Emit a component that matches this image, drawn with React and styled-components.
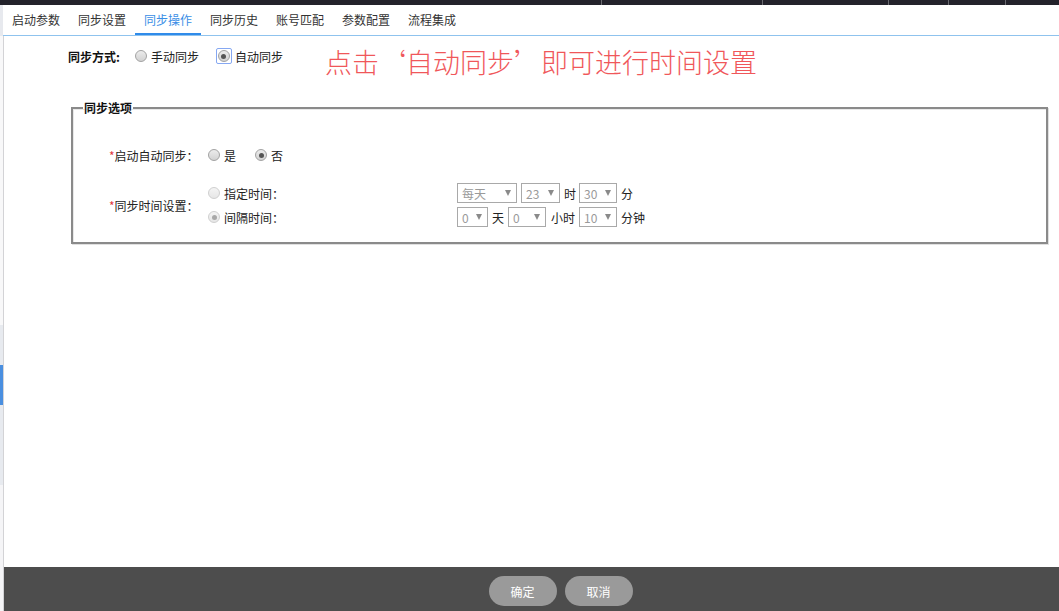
import React from "react";
import styled, { createGlobalStyle } from "styled-components";

const Global = createGlobalStyle`
  html, body { margin: 0; padding: 0; background: #fff; }
  body {
    font-family: "Noto Sans CJK SC", "Liberation Sans", sans-serif;
    font-size: 12px;
    color: #222;
  }
  * { box-sizing: border-box; }
`;

const Page = styled.div`
  width: 1059px;
  height: 611px;
  display: flex;
  flex-direction: column;
  overflow: hidden;
`;

const TopBar = styled.div`
  height: 5px;
  display: flex;
  background: #23222b;
`;

const TopSeg = styled.div`
  width: ${(p) => p.$w}px;
  flex: ${(p) => (p.$grow ? 1 : "none")};
  border-left: ${(p) => (p.$first ? "none" : "1px solid #6a6a70")};
`;

const Body = styled.div`
  flex: 1;
  display: flex;
  min-height: 0;
`;

const Sidebar = styled.div`
  width: 3px;
  display: flex;
  flex-direction: column;
`;

const SideSeg = styled.div`
  height: ${(p) => p.$h}px;
  flex: ${(p) => (p.$grow ? 1 : "none")};
  background: ${(p) => p.$c};
`;

const Main = styled.div`
  flex: 1;
  display: flex;
  flex-direction: column;
  min-width: 0;
`;

const TabBar = styled.div`
  height: 31px;
  display: flex;
  border-bottom: 1px solid #8fc3ee;
`;

const Tab = styled.div`
  width: 66px;
  height: 30px;
  line-height: 30px;
  text-align: center;
  font-size: 12px;
  color: ${(p) => (p.$active ? "#3a8ee6" : "#333")};
  border-bottom: 2px solid ${(p) => (p.$active ? "#2f8bea" : "transparent")};
  margin-bottom: -1px;
`;

const Content = styled.div`
  flex: 1;
  display: flex;
  flex-direction: column;
  border-left: 1px solid #d3d3d6;
  min-height: 0;
`;

const Form = styled.div`
  flex: 1;
  padding: 10px 11px 0 64px;
`;

const ModeRow = styled.div`
  display: flex;
  align-items: flex-start;
`;

const Cell = styled.div`
  height: 20px;
  display: flex;
  align-items: center;
  margin-right: ${(p) => p.$mr || 0}px;
`;

const BoldLabel = styled.span`
  font-weight: bold;
  color: #111;
`;

const Text = styled.span`
  color: #222;
  margin-left: ${(p) => p.$ml || 0}px;
`;

const Note = styled.div`
  margin-left: 42px;
  line-height: 32px;
  font-size: 27px;
  color: #f0575a;
  white-space: nowrap;
  font-weight: 300;
`;

const RadioDot = styled.span`
  width: 12px;
  height: 12px;
  border-radius: 50%;
  flex: none;
  display: inline-flex;
  align-items: center;
  justify-content: center;
  border: 1px solid ${(p) => (p.$disabled ? "#cfcfcf" : "#a2a2a2")};
  background: ${(p) =>
    p.$disabled
      ? "linear-gradient(#f4f4f4, #e6e6e6)"
      : "linear-gradient(#ececec, #d2d2d2)"};
  &::after {
    content: "";
    display: ${(p) => (p.$checked ? "block" : "none")};
    width: 5px;
    height: 5px;
    border-radius: 50%;
    background: ${(p) => (p.$disabled ? "#a8a8a8" : "#555")};
  }
`;

const FocusRing = styled.span`
  display: inline-flex;
  padding: 1px;
  border: 1px solid #86a8f2;
  border-radius: 2px;
  margin-left: -2px;
`;

const Fieldset = styled.fieldset`
  margin: 23px 0 0 3px;
  padding: 0 0 15px 36px;
  border: 2px solid #8a8a8a;
  box-shadow: inset 1px 1px 0 #e8e8e8, 1px 1px 0 #e0e0e0;
`;

const Legend = styled.legend`
  font-weight: bold;
  color: #111;
  line-height: 14px;
  padding: 0 1px;
  margin-left: -26px;
`;

const FormRow = styled.div`
  display: flex;
  align-items: center;
  margin-top: ${(p) => p.$mt}px;
`;

const Label = styled.div`
  width: 99px;
  color: #222;
  white-space: nowrap;
`;

const Star = styled.span`
  color: #e0393e;
`;

const Options = styled.div`
  display: flex;
  flex-direction: column;
  gap: 4px;
`;

const OptLine = styled.div`
  display: flex;
  align-items: center;
  height: 20px;
`;

const OptLabel = styled.div`
  width: 249px;
  display: flex;
  align-items: center;
`;

const Select = styled.div`
  width: ${(p) => p.$w}px;
  margin-left: ${(p) => p.$ml || 0}px;
  height: 20px;
  border: 1px solid #a9a9a9;
  display: flex;
  align-items: center;
  justify-content: space-between;
  padding: 0 5px 0 4px;
  color: #9a9a9a;
  background: #fff;
  flex: none;
  &::after {
    content: "";
    width: 0;
    height: 0;
    border-left: 3.5px solid transparent;
    border-right: 3.5px solid transparent;
    border-top: 6px solid #8a8a8a;
  }
`;

const Unit = styled.span`
  margin: 0 ${(p) => p.$mr ?? 4}px 0 ${(p) => p.$ml ?? 4}px;
  color: #222;
`;

const BottomBar = styled.div`
  height: 44px;
  background: #4d4d4d;
  display: flex;
  justify-content: center;
  align-items: flex-start;
  gap: 8px;
  padding: 9px 0 0 58px;
`;

const Button = styled.button`
  width: 68px;
  height: 30px;
  border: none;
  border-radius: 15px;
  background: #9a9a9a;
  color: #fff;
  font-family: inherit;
  font-size: 12px;
  padding: 0;
`;

function Radio({ checked, disabled }) {
  return <RadioDot $checked={checked} $disabled={disabled} />;
}

const tabs = ["启动参数", "同步设置", "同步操作", "同步历史", "账号匹配", "参数配置", "流程集成"];

export default function App() {
  return (
    <>
      <Global />
      <Page>
        <TopBar>
          <TopSeg $first $w={601} />
          <TopSeg $w={161} />
          <TopSeg $w={126} />
          <TopSeg $w={60} />
          <TopSeg $w={57} />
          <TopSeg $grow />
        </TopBar>
        <Body>
          <Sidebar>
            <SideSeg $h={31} $c="#e7e9ee" />
            <SideSeg $h={289} $c="#f8f8f9" />
            <SideSeg $h={40} $c="#e7eaef" />
            <SideSeg $h={40} $c="#4a8fe0" />
            <SideSeg $h={80} $c="#e7eaef" />
            <SideSeg $grow $c="#f5f5f7" />
          </Sidebar>
          <Main>
            <TabBar>
              {tabs.map((t, i) => (
                <Tab key={t} $active={i === 2}>
                  {t}
                </Tab>
              ))}
            </TabBar>
            <Content>
              <Form>
                <ModeRow>
                  <Cell $mr={15}>
                    <BoldLabel>同步方式:</BoldLabel>
                  </Cell>
                  <Cell $mr={19}>
                    <Radio />
                    <Text $ml={4}>手动同步</Text>
                  </Cell>
                  <Cell>
                    <FocusRing>
                      <Radio checked />
                    </FocusRing>
                    <Text $ml={3}>自动同步</Text>
                  </Cell>
                  <Note>点击‘自动同步’即可进行时间设置</Note>
                </ModeRow>

                <Fieldset>
                  <Legend>同步选项</Legend>
                  <FormRow $mt={30}>
                    <Label>
                      <Star>*</Star>启动自动同步：
                    </Label>
                    <Cell $mr={19}>
                      <Radio />
                      <Text $ml={4}>是</Text>
                    </Cell>
                    <Cell>
                      <Radio checked />
                      <Text $ml={4}>否</Text>
                    </Cell>
                  </FormRow>
                  <FormRow $mt={18}>
                    <Label>
                      <Star>*</Star>同步时间设置：
                    </Label>
                    <Options>
                      <OptLine>
                        <OptLabel>
                          <Radio disabled />
                          <Text $ml={4}>指定时间：</Text>
                        </OptLabel>
                        <Select $w={60}>每天</Select>
                        <Select $w={39} $ml={4}>23</Select>
                        <Unit $mr={3}>时</Unit>
                        <Select $w={38}>30</Select>
                        <Unit>分</Unit>
                      </OptLine>
                      <OptLine>
                        <OptLabel>
                          <Radio checked disabled />
                          <Text $ml={4}>间隔时间：</Text>
                        </OptLabel>
                        <Select $w={31}>0</Select>
                        <Unit>天</Unit>
                        <Select $w={38}>0</Select>
                        <Unit $ml={5}>小时</Unit>
                        <Select $w={38}>10</Select>
                        <Unit>分钟</Unit>
                      </OptLine>
                    </Options>
                  </FormRow>
                </Fieldset>
              </Form>
              <BottomBar>
                <Button>确定</Button>
                <Button>取消</Button>
              </BottomBar>
            </Content>
          </Main>
        </Body>
      </Page>
    </>
  );
}
